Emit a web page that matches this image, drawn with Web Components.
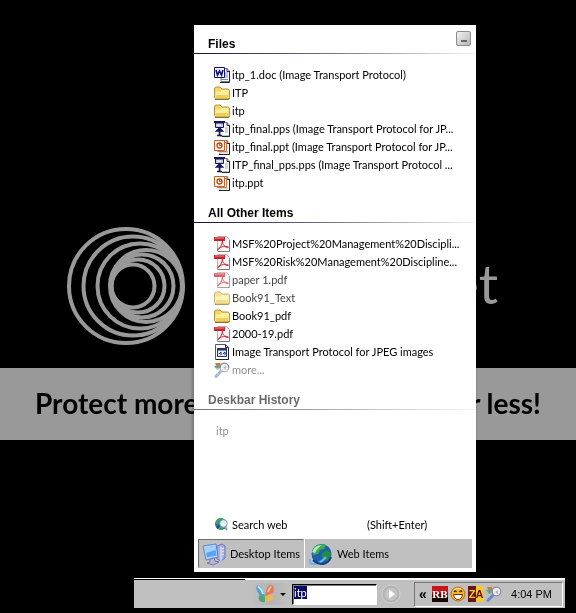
<!DOCTYPE html>
<html lang="en">
<head>
<meta charset="utf-8">
<title>Deskbar</title>
<style>
  html, body { margin: 0; background: #000; }
  body { font-family: Lato, "Liberation Sans", sans-serif; font-size: 11px; color: #000; }
</style>
</head>
<body>
<desk-top>
  <result-panel>
    <result-group heading="Files">
      <result-item icon="word">itp_1.doc (Image Transport Protocol)</result-item>
      <result-item icon="folder">ITP</result-item>
      <result-item icon="folder">itp</result-item>
      <result-item icon="pps">itp_final.pps (Image Transport Protocol for JP...</result-item>
      <result-item icon="ppt">itp_final.ppt (Image Transport Protocol for JP...</result-item>
      <result-item icon="pps">ITP_final_pps.pps (Image Transport Protocol ...</result-item>
      <result-item icon="ppt">itp.ppt</result-item>
    </result-group>
    <result-group heading="All Other Items">
      <result-item icon="pdf">MSF%20Project%20Management%20Discipli...</result-item>
      <result-item icon="pdf">MSF%20Risk%20Management%20Discipline...</result-item>
      <result-item icon="pdf" class="faint">paper 1.pdf</result-item>
      <result-item icon="folder" class="faint">Book91_Text</result-item>
      <result-item icon="folder">Book91_pdf</result-item>
      <result-item icon="pdf">2000-19.pdf</result-item>
      <result-item icon="html">Image Transport Protocol for JPEG images</result-item>
      <result-item icon="search" class="muted">more...</result-item>
    </result-group>
    <result-group heading="Deskbar History">
      <result-item class="muted">itp</result-item>
    </result-group>
    <result-item slot="footer" icon="websearch" hint="(Shift+Enter)">Search web</result-item>
    <panel-tabs slot="footer"></panel-tabs>
  </result-panel>
  <task-bar></task-bar>
  <water-mark slot="overlay"></water-mark>
</desk-top>

<script>
const ICONS = {
  word: `<path d="M7 1.500h6l2.500 2.500v10.500H7z" fill="#fff" stroke="#777a90"/><path d="M13 1.500v3h3" fill="none" stroke="#222"/><path d="M15.500 4v11.500H6" fill="none" stroke="#222"/><path d="M10 6h4M10 8h4M10 10h4M7 12.500h7" stroke="#7c86b4"/><path d="M.5.500h10v10H.5z" fill="#fff" stroke="#14146e"/><path d="M2 2h7v7H2z" fill="#e4e8ff"/><path d="M2 3l1.500 5L5.500 4l2 4L9 3" fill="none" stroke="#101070" stroke-width="1.600"/>`,
  folder: `<path d="M.5 4q0-2 2-2H6l2 2h5.500q2 0 2 2v6.500q0 1.500-2 1.500h-11q-2 0-2-1.500z" fill="#f2d66a" stroke="#b2953c"/><path d="M1.500 6.500h5L8 5h6.500v7q0 1-1 1h-11q-1 0-1-1z" fill="#fdf09d"/><path d="M2 10h12v3H2z" fill="#efcf5c"/><path d="M1 14.500h13.500l1-1.500" stroke="#8a7128" fill="none"/>`,
  pps: `<path d="M6 1.500h7l2.500 2.500v11H6z" fill="#fff" stroke="#888"/><path d="M13 1.500v3h2.500v11H8" fill="none" stroke="#222"/><path d="M11 7h3M11 9h3M11 11h3" stroke="#aaa"/><path d="M0 1h11" stroke="#16165c" stroke-width="2"/><path d="M1.500 2h8v4.500h-8z" fill="#c4c8dd" stroke="#16165c"/><path d="M3 4h4" stroke="#fff"/><path d="M5.500 6v9M2.500 10l3-3 3 3zM3 14.500h5" stroke="#16165c" stroke-width="1.500" fill="#2b2b7c"/>`,
  ppt: `<path d="M6 1.500h7l2.500 2.500v11.500H6z" fill="#fff" stroke="#999"/><path d="M13 1.500v3h2.500v11H5" fill="none" stroke="#222"/><path d="M12 7h2M12 9h2M7 13h7" stroke="#aaa"/><path d="M3.500 3.500h9v9h-9z" fill="#fff" stroke="#c87a50"/><path d="M.5 1.500h10v10H.5z" fill="#fff3e8" stroke="#c3622d"/><circle cx="5.500" cy="6.500" r="2.500" fill="none" stroke="#c04a18" stroke-width="1.300"/><path d="M5.500 4v2.500H8" fill="none" stroke="#c04a18"/>`,
  pdf: `<path d="M3.500.500h9l3 3v12h-12z" fill="#f7f5f5" stroke="#b9b0b0"/><path d="M15.500 4v11.500H4" fill="none" stroke="#857878"/><path d="M0 1h11v4H0z" fill="#c8232c"/><path d="M1 2h9" stroke="#ef8d8d"/><path d="M8.500 5c-.5 4-2.500 7-4 8.500-1 1-1.500-.5.500-1.500 3-1.500 6-2 8.500-1.500 1.500.500 1 1.500-.5 1-3-1-5-4-4.500-6.500z" fill="none" stroke="#cf3038"/>`,
  html: `<path d="M1.500.500h10l3 3v12h-13z" fill="#fff" stroke="#55586c"/><path d="M11.500.500v3h3v12H2" fill="none" stroke="#222"/><path d="M3.500 4.500h9v8h-9z" fill="#dfe6fa" stroke="#26336f"/><path d="M3 5.500h10" stroke="#26336f" stroke-width="2"/><path d="M5 10l2-2v3M9 10l2-2v3" fill="none" stroke="#26336f"/>`,
  search: `<path d="M1 1l5 0 1 4-3 2z" fill="#d3744c"/><path d="M0 4l4-1 2 4-3 1z" fill="#6aa877"/><path d="M6 1l4 0-2 5z" fill="#e0b658"/><path d="M7 9l-5 5.500" stroke="#6f88c4" stroke-width="3" stroke-linecap="round"/><circle cx="10.500" cy="5.500" r="4.300" fill="#e8eef7" stroke="#8390a8" stroke-width="1.300"/><path d="M9 6l3-2v4z" fill="#e09a88"/>`,
  websearch: `<circle cx="7" cy="7" r="6" fill="#3274a8"/><path d="M2 4q3-4 7-3-1 3-4 3l-1 3-3 0zM5 8l4 1-1 4q-4 0-5-3z" fill="#41a464"/><path d="M6 8l-3 3" stroke="#214e75" stroke-width="2"/><circle cx="9.500" cy="6.500" r="3.800" fill="#e4f2f5" stroke="#80a5b0"/><path d="M11 10l2 3" stroke="#8999ac" stroke-width="2"/>`,
  computer: `<path d="M15 4l5-2 3 2v12l-4 3-4-2z" fill="#a9aee0" stroke="#7178b5"/><path d="M19 5v14M20 7l2-1M20 10l2-1M20 13l2-1" stroke="#eef"/><path d="M1 4l13-2 2 13-12 3z" fill="#b9d7f6" stroke="#6381c4"/><path d="M3 5.500l10-1.500 1.500 9.500-9.500 2z" fill="#55a6f2"/><path d="M3 5.500l10-1.500.5 4-9.500 3z" fill="#9fd3ff"/><path d="M8 17l4-1 1 3 4 1-6 3-6-2 3-1z" fill="#b5b7dc" stroke="#7477ad"/>`,
  globe: `<circle cx="12.500" cy="12" r="10" fill="#1c5fae"/><path d="M5 5q5-4 12-2l-2 4-4 1-2 4-5 1q-1-5 1-8z" fill="#3cae4c"/><path d="M12 12l5-4 5 3q0 5-4 8l-4-2z" fill="#248a4a"/><path d="M3 10q3-7 10-7-5 3-7 8z" fill="#b5ecc0"/><path d="M1 17q-1 6 5 5 6-1 11-7" fill="none" stroke="#69b5ee" stroke-width="2"/><path d="M4 18q4 4 10 4 6-1 8-7" fill="none" stroke="#123f83" stroke-width="2"/>`,
  butterfly: `<path d="M12 15Q8 1 3 3q-2 3 3 10z" fill="#4d9fd0"/><path d="M12 15q-7-4-7 1t7 5z" fill="#4fa574"/><path d="M12 15Q13 3 18 2q5 1 3 8z" fill="#e07a55"/><path d="M12 15q9-5 9 0t-9 6z" fill="#e8b95a"/><path d="M4 4q4 2 6 8" stroke="#c8e6ee" fill="none" stroke-width="2"/><path d="M15 10q2-5 4-6" stroke="#f7bd9f" fill="none" stroke-width="2"/>`,
  smile: `<circle cx="8" cy="8" r="7" fill="#f5b52c" stroke="#b86d19"/><path d="M4 6q1-2 2.500 0M9.500 6q1.500-2 2.500 0" stroke="#512b05" fill="none" stroke-width="1.300"/><path d="M3.500 8.500h9q-1 5-4.500 5t-4.500-5z" fill="#fff" stroke="#71340b"/><path d="M4 4q3-3 7-1" stroke="#ffe680" fill="none"/>`,
  go: `<circle cx="10" cy="10" r="9" fill="#b4b4b4" stroke="#d0d0d0"/><circle cx="10" cy="10" r="7" fill="#c4c4c4" stroke="#b0b0b0"/><path d="M8 5.500l6 4.500-6 4.500z" fill="#fff"/>`
};

class SysIcon extends HTMLElement {
  connectedCallback() {
    const name = this.getAttribute('name');
    const grid = { computer: 24, globe: 24, butterfly: 24, go: 20 }[name] || 16;
    this.attachShadow({ mode: 'open' });
    this.shadowRoot.innerHTML = `
      <style>
        :host { display: block; flex: none; width: var(--icon, 16px); height: var(--icon, 16px); }
        svg { display: block; width: 100%; height: 100%; }
      </style>
      <svg viewBox="0 0 ${grid} ${grid}" aria-hidden="true">${ICONS[name]}</svg>
    `;
  }
}
customElements.define('sys-icon', SysIcon);

class DeskTop extends HTMLElement {
  connectedCallback() {
    this.attachShadow({ mode: 'open' });
    this.shadowRoot.innerHTML = `
      <style>
        :host {
          display: flex;
          flex-direction: column;
          gap: 6px;
          box-sizing: border-box;
          min-height: 100vh;
          padding: 25px 0 5px;
          position: relative;
          isolation: isolate;
          overflow: hidden;
          background: #000;
        }
      </style>
      <slot></slot>
      <slot name="overlay"></slot>
    `;
  }
}
customElements.define('desk-top', DeskTop);

class ResultPanel extends HTMLElement {
  connectedCallback() {
    this.attachShadow({ mode: 'open' });
    this.shadowRoot.innerHTML = `
      <style>
        :host {
          display: flex;
          flex-direction: column;
          flex: 1;
          margin: 0 100px 0 194px;
          background: #fff;
          position: relative;
        }
        main { flex: 1; }
        footer { padding: 0 4px 4px; }
        button {
          position: absolute;
          top: 6px;
          right: 5px;
          width: 15px;
          height: 15px;
          padding: 0;
          border: 1px solid #8c8c8c;
          border-radius: 2px;
          background: linear-gradient(135deg, #f4f4f4, #b4b4b4);
        }
        button::after {
          content: "";
          display: block;
          width: 6px;
          height: 2px;
          margin: 5px auto 0;
          background: #666;
        }
      </style>
      <button type="button" aria-label="Minimize"></button>
      <main><slot></slot></main>
      <footer><slot name="footer"></slot></footer>
    `;
  }
}
customElements.define('result-panel', ResultPanel);

class ResultGroup extends HTMLElement {
  connectedCallback() {
    this.attachShadow({ mode: 'open' });
    this.shadowRoot.innerHTML = `
      <style>
        :host { display: block; }
        h2 {
          margin: 0;
          padding: 14px 14px 2px;
          font-family: "Liberation Sans", Arial, sans-serif;
          font-size: 12px;
          line-height: 14px;
          font-weight: bold;
        }
        hr {
          height: 1px;
          margin: 0 0 12px;
          border: 0;
          background: linear-gradient(90deg, #101030, #77778a 50%, #f4f4f4);
        }
        div { padding: 0 4px 0 20px; }
        :host(:first-child) h2 { padding-top: 12px; }
      </style>
      <h2>${this.getAttribute('heading')}</h2>
      <hr>
      <div><slot></slot></div>
    `;
  }
}
customElements.define('result-group', ResultGroup);

class ResultItem extends HTMLElement {
  connectedCallback() {
    const icon = this.getAttribute('icon');
    const hint = this.getAttribute('hint');
    this.attachShadow({ mode: 'open' });
    this.shadowRoot.innerHTML = `
      <style>
        :host { display: block; }
        :host([slot="footer"]) { padding: 0 16px 5px; }
        a {
          display: grid;
          grid-template-columns: auto 133px 1fr;
          align-items: center;
          column-gap: 2px;
          height: 18px;
          line-height: 18px;
          color: #000;
          text-decoration: none;
          white-space: nowrap;
        }
        :host(:not([hint])) a { display: flex; }
        :host(:not([icon])) a { padding-left: 2px; }
        :host(.faint) a { color: #444; }
        :host(.faint) sys-icon { opacity: 0.7; }
        :host(.muted) a { color: #444; }
      </style>
      <a href="#">${icon ? `<sys-icon name="${icon}"></sys-icon>` : ''}<span><slot></slot></span>${hint ? `<span>${hint}</span>` : ''}</a>
    `;
  }
}
customElements.define('result-item', ResultItem);

class PanelTabs extends HTMLElement {
  connectedCallback() {
    this.attachShadow({ mode: 'open' });
    this.shadowRoot.innerHTML = `
      <style>
        :host {
          display: grid;
          grid-template-columns: 106px 1fr;
          column-gap: 1px;
          height: 29px;
          --icon: 24px;
        }
        button {
          display: flex;
          align-items: center;
          gap: 4px;
          padding: 0 3px;
          border: 1px solid #c0c0c0;
          background: #c0c0c0;
          font: inherit;
          color: #000;
          white-space: nowrap;
        }
        .on { border-color: #6c6c6c #c0c0c0 #c0c0c0 #6c6c6c; }
      </style>
      <button type="button" class="on" aria-pressed="true"><sys-icon name="computer"></sys-icon>Desktop Items</button>
      <button type="button" aria-pressed="false"><sys-icon name="globe"></sys-icon>Web Items</button>
    `;
  }
}
customElements.define('panel-tabs', PanelTabs);

class TaskBar extends HTMLElement {
  connectedCallback() {
    this.attachShadow({ mode: 'open' });
    this.shadowRoot.innerHTML = `
      <style>
        :host {
          display: flex;
          height: 30px;
          margin: 0 11px 0 134px;
          background: #c0c0c0;
        }
        .buttons {
          width: 111px;
          box-sizing: border-box;
          border-top: 1px solid #fff;
          box-shadow: inset 0 1px #000;
        }
        .bar {
          flex: 1;
          display: flex;
          align-items: center;
          box-shadow: inset 0 2px #fff;
          padding: 2px 2px 0 6px;
        }
        button { display: flex; align-items: center; padding: 0; border: 0; background: none; }
        .menu {
          gap: 4px;
          padding: 0 4px 0 3px;
          margin-right: 2px;
          border-radius: 8px;
          background: linear-gradient(90deg, #c0c0c0, #b4b4b4, #c0c0c0);
          --icon: 22px;
        }
        .menu i { border: 3px solid transparent; border-top-color: #000; border-bottom: 0; }
        input {
          box-sizing: border-box;
          width: 85px;
          height: 21px;
          padding: 0 1px 3px;
          border: 1px solid;
          border-color: #000 #fff #fff #000;
          border-radius: 0;
          outline: 0;
          box-shadow: inset 1px 1px #777;
          background: #fff;
          font: inherit;
        }
        input::selection { background: #0a0a66; color: #fff; }
        .go { margin-left: 4px; --icon: 20px; }
        .tray {
          display: flex;
          align-items: center;
          gap: 2px;
          box-sizing: border-box;
          width: 149px;
          height: 25px;
          margin-left: auto;
          padding: 0 4px;
          border: 1px solid;
          border-color: #777 #fff #fff #777;
          font-family: "Liberation Sans", Arial, sans-serif;
        }
        .chevron { width: 11px; font-size: 14px; line-height: 14px; font-weight: bold; }
        .badge {
          width: 16px;
          line-height: 16px;
          text-align: center;
          font-weight: bold;
        }
        .rb { background: linear-gradient(#c5161c 35%, #1c0505 75%); color: #fff; font-family: "Liberation Serif", serif; }
        .za { background: linear-gradient(90deg, #6c1414 50%, #f1cb36 50%); color: #f1cb36; }
        .za b { color: #6c1414; }
        time { margin: 0 6px 0 auto; white-space: nowrap; }
      </style>
      <div class="buttons"></div>
      <div class="bar">
        <button type="button" class="menu" aria-label="Search menu"><sys-icon name="butterfly"></sys-icon><i></i></button>
        <input type="text" value="itp" aria-label="Search">
        <button type="button" class="go" aria-label="Go"><sys-icon name="go"></sys-icon></button>
        <div class="tray">
          <span class="chevron">«</span>
          <span class="badge rb">RB</span>
          <sys-icon name="smile"></sys-icon>
          <span class="badge za">Z<b>A</b></span>
          <sys-icon name="search"></sys-icon>
          <time>4:04 PM</time>
        </div>
      </div>
    `;

    const input = this.shadowRoot.querySelector('input');
    input.focus();
    input.select();
  }
}
customElements.define('task-bar', TaskBar);

// Grey on black, screened over the desktop: only dark pixels are lightened.
class WaterMark extends HTMLElement {
  connectedCallback() {
    this.attachShadow({ mode: 'open' });
    this.shadowRoot.innerHTML = `
      <style>
        :host {
          position: absolute;
          inset: 0;
          pointer-events: none;
          mix-blend-mode: screen;
          font-family: Lato, "Open Sans", sans-serif;
          white-space: nowrap;
        }
        .logo, .band { display: flex; justify-content: space-between; }
        .logo {
          height: 118px;
          margin: 227px 78px 0 67px;
          line-height: 114px;
          color: #999;
          font-size: 54px;
        }
        svg { width: 118px; height: 118px; fill: none; stroke: #999; stroke-width: 4; }
        .band {
          margin-top: 23px;
          padding: 0 35px 2px;
          line-height: 70px;
          background: linear-gradient(90deg, #999 33%, #666 34% 82%, #999 83%);
          color: #000;
          font-size: 28px;
          font-weight: bold;
        }
      </style>
      <div class="logo">
        <svg viewBox="0 0 118 118" aria-hidden="true">
          <circle cx="59" cy="59" r="57"/>
          <circle cx="66" cy="59" r="49.500"/>
          <circle cx="73" cy="59" r="42.500"/>
          <circle cx="79" cy="59" r="36"/>
          <circle cx="75" cy="59" r="31.500"/>
          <circle cx="71" cy="59" r="26.500"/>
          <circle cx="66" cy="59" r="21.500"/>
        </svg>
        <span>et</span>
      </div>
      <div class="band"><span>Protect more</span><span>r less!</span></div>
    `;
  }
}
customElements.define('water-mark', WaterMark);
</script>
</body>
</html>
